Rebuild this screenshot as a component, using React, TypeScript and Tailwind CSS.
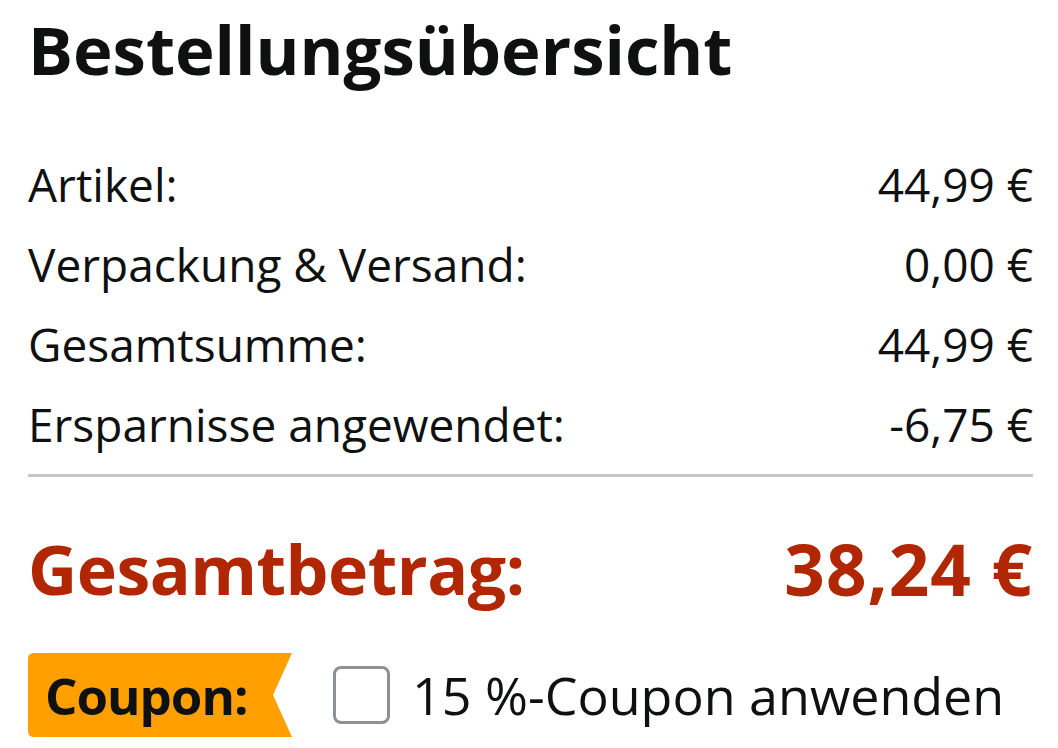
const rows = [
  { label: "Artikel:", value: "44,99 €" },
  { label: "Verpackung & Versand:", value: "0,00 €" },
  { label: "Gesamtsumme:", value: "44,99 €" },
  { label: "Ersparnisse angewendet:", value: "-6,75 €" },
];

export default function App() {
  return (
    <div
      className="h-[748px] w-[1058px] overflow-hidden bg-white pl-[28px] pr-[25px] text-[#0f1111]"
      style={{ fontFamily: '"Open Sans", "Noto Sans", sans-serif' }}
    >
      <h1 className="mt-[4px] text-[67px] font-bold leading-[90px]">Bestellungsübersicht</h1>

      <div className="mt-[50px] flex flex-col">
        {rows.map((row) => (
          <div key={row.label} className="flex h-[80px] items-center justify-between text-[46px] leading-none">
            <span>{row.label}</span>
            <span>{row.value}</span>
          </div>
        ))}
      </div>

      <div className="mt-[10px] h-[3px] bg-[#c4c7c7]" />

      <div className="mt-[56px] flex items-center justify-between font-bold leading-none text-[#b12704]">
        <span className="text-[68px] tracking-[-0.5px]">Gesamtbetrag:</span>
        <span className="text-[71px] tracking-[1px]">38,24 €</span>
      </div>

      <div className="mt-[49px] flex items-center">
        <div className="relative flex h-[84px] w-[264px] items-center">
          <svg className="absolute inset-0" width="264" height="84" viewBox="0 0 264 84">
            <path d="M6 0 H264 L245 42 L264 84 H6 Q0 84 0 78 V6 Q0 0 6 0 Z" fill="#ff9f00" />
          </svg>
          <span className="relative pl-[17px] text-[51px] font-bold leading-none tracking-[-1px] text-[#0f1111]">Coupon:</span>
        </div>
        <div className="ml-[41px] h-[58px] w-[57px] rounded-[8px] border-[3px] border-[#8d9096] bg-white" />
        <span className="ml-[22px] text-[52px] leading-none">15 %-Coupon anwenden</span>
      </div>
    </div>
  );
}
